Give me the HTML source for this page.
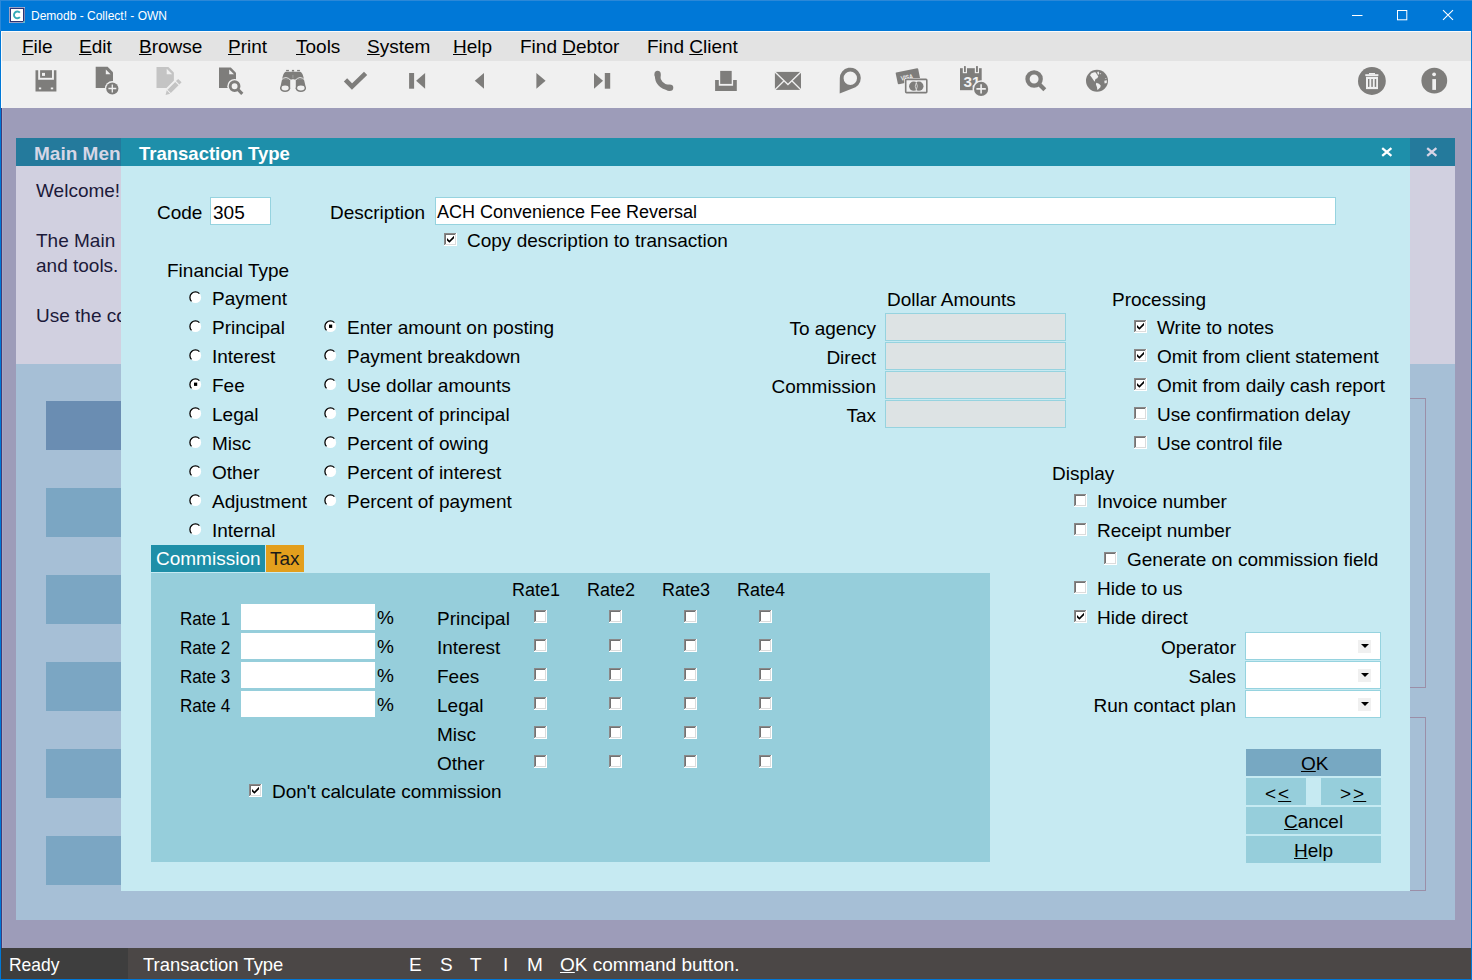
<!DOCTYPE html>
<html><head><meta charset="utf-8"><style>
html,body{margin:0;padding:0;width:1472px;height:980px;overflow:hidden}
body{position:relative;font-family:"Liberation Sans",sans-serif}
body>div,body>svg{position:absolute}
.t{white-space:nowrap}
u{text-decoration:underline;text-decoration-thickness:1px;text-underline-offset:1px}
</style></head><body>
<div style="left:0px;top:0px;width:1472px;height:980px;background:#0078d7;"></div>
<svg style="left:9px;top:7px" width="16" height="16" viewBox="0 0 16 16"><rect x="0" y="0" width="16" height="16" fill="#b8bcd8"/><rect x="0.8" y="0.8" width="14.6" height="14.4" fill="#2b3576"/><rect x="2" y="2" width="12" height="12" fill="#fff"/><path d="M10.9 5.6 A3.4 3.4 0 1 0 10.9 10.2" fill="none" stroke="#35abb8" stroke-width="1.9"/><rect x="14.2" y="14.2" width="1.8" height="1.8" fill="#5cc0d0"/></svg>
<div class="t" style="left:31px;top:10px;font-size:12px;line-height:12px;color:#fff;">Demodb - Collect! - OWN</div>
<svg style="left:1350px;top:8px" width="110" height="16" viewBox="0 0 110 16"><path d="M2 7.5 H12.5" stroke="#fff" stroke-width="1"/><rect x="47.5" y="2.5" width="9.3" height="9.3" fill="none" stroke="#fff"/><path d="M93 2.2 L103 11.8 M103 2.2 L93 11.8" stroke="#fff" stroke-width="1.1"/></svg>
<div style="left:1px;top:31px;width:1470px;height:30px;background:#e3e3e3;"></div>
<div style="left:1px;top:31px;width:1470px;height:1px;background:#fbfbfb;"></div>
<div style="left:1px;top:31px;width:1px;height:77px;background:#fbfbfb;"></div>
<div style="left:0px;top:0px;width:1472px;height:1px;background:#2b88d8;"></div>
<div style="left:0px;top:0px;width:1px;height:31px;background:#2b88d8;"></div>
<div style="left:2px;top:61px;width:1469px;height:47px;background:#f0f0f0;"></div>
<div class="t" style="left:22px;top:37px;font-size:19px;line-height:19px;color:#000;"><u>F</u>ile</div>
<div class="t" style="left:79px;top:37px;font-size:19px;line-height:19px;color:#000;"><u>E</u>dit</div>
<div class="t" style="left:139px;top:37px;font-size:19px;line-height:19px;color:#000;"><u>B</u>rowse</div>
<div class="t" style="left:228px;top:37px;font-size:19px;line-height:19px;color:#000;"><u>P</u>rint</div>
<div class="t" style="left:296px;top:37px;font-size:19px;line-height:19px;color:#000;"><u>T</u>ools</div>
<div class="t" style="left:367px;top:37px;font-size:19px;line-height:19px;color:#000;"><u>S</u>ystem</div>
<div class="t" style="left:453px;top:37px;font-size:19px;line-height:19px;color:#000;"><u>H</u>elp</div>
<div class="t" style="left:520px;top:37px;font-size:19px;line-height:19px;color:#000;">Find <u>D</u>ebtor</div>
<div class="t" style="left:647px;top:37px;font-size:19px;line-height:19px;color:#000;">Find <u>C</u>lient</div>
<div style="left:1px;top:108px;width:1470px;height:840px;background:#9d9cb9;"></div>
<div style="left:1px;top:108px;width:1px;height:840px;background:#403c78;"></div>
<div style="left:2px;top:108px;width:1px;height:840px;background:#a6a6c2;"></div>
<div style="left:1470px;top:108px;width:1px;height:840px;background:#a49fb8;"></div>
<div style="left:16px;top:138px;width:1439px;height:28px;background:#247a9c;"></div>
<div class="t" style="left:34px;top:144px;font-size:19px;line-height:19px;color:#d6d6e6;font-weight:bold">Main Menu</div>
<svg style="left:1426px;top:147px" width="12" height="10" viewBox="0 0 12 10"><path d="M1.2 1.1 L10.4 8.9 M10.4 1.1 L1.2 8.9" stroke="#d8d4e6" stroke-width="2.3"/></svg>
<div style="left:16px;top:166px;width:1439px;height:198px;background:#d1d0e0;"></div>
<div class="t" style="left:36px;top:181px;font-size:19px;line-height:19px;color:#1c1a3a;">Welcome!</div>
<div class="t" style="left:36px;top:231px;font-size:19px;line-height:19px;color:#1c1a3a;">The Main</div>
<div class="t" style="left:36px;top:256px;font-size:19px;line-height:19px;color:#1c1a3a;">and tools.</div>
<div class="t" style="left:36px;top:306px;font-size:19px;line-height:19px;color:#1c1a3a;">Use the co</div>
<div style="left:16px;top:364px;width:1439px;height:556px;background:#a6bfd6;"></div>
<div style="left:46px;top:401px;width:100px;height:49px;background:#6a8db2;"></div>
<div style="left:46px;top:488px;width:100px;height:49px;background:#7ba6c3;"></div>
<div style="left:46px;top:575px;width:100px;height:49px;background:#7ba6c3;"></div>
<div style="left:46px;top:662px;width:100px;height:49px;background:#7ba6c3;"></div>
<div style="left:46px;top:749px;width:100px;height:49px;background:#7ba6c3;"></div>
<div style="left:46px;top:836px;width:100px;height:49px;background:#7ba6c3;"></div>
<div style="left:1380px;top:398px;width:46px;height:290px;border:1px solid #9b8fa8;border-left:none;box-sizing:border-box"></div>
<div style="left:1380px;top:717px;width:46px;height:174px;border:1px solid #9b8fa8;border-left:none;box-sizing:border-box"></div>
<div style="left:121px;top:138px;width:1289px;height:28px;background:#1e8faa;"></div>
<div class="t" style="left:139px;top:145px;font-size:18.5px;line-height:18.5px;color:#fff;font-weight:bold">Transaction Type</div>
<svg style="left:1381px;top:147px" width="12" height="10" viewBox="0 0 12 10"><path d="M1.2 1.1 L10.4 8.9 M10.4 1.1 L1.2 8.9" stroke="#fff" stroke-width="2.3"/></svg>
<div style="left:121px;top:166px;width:1289px;height:725px;background:#c6eaf2;"></div>
<div class="t" style="left:157px;top:203px;font-size:19px;line-height:19px;color:#000;">Code</div>
<div style="left:210px;top:197px;width:61px;height:28px;background:#fff;border:1px solid #96d3df;box-sizing:border-box"></div>
<div class="t" style="left:213px;top:203px;font-size:19px;line-height:19px;color:#000;">305</div>
<div class="t" style="left:330px;top:203px;font-size:19px;line-height:19px;color:#000;">Description</div>
<div style="left:435px;top:197px;width:901px;height:28px;background:#fff;border:1px solid #96d3df;box-sizing:border-box"></div>
<div class="t" style="left:437px;top:203px;font-size:18px;line-height:18px;color:#000;">ACH Convenience Fee Reversal</div>
<svg style="left:444px;top:233px" width="13" height="13" viewBox="0 0 13 13"><rect x="0" y="0" width="13" height="13" fill="#fff"/><rect x="0" y="0" width="12" height="12" fill="#8a8888"/><rect x="1" y="1" width="11" height="11" fill="#dcdcdc"/><rect x="1" y="1" width="10" height="10" fill="#727272"/><rect x="2" y="2" width="9" height="9" fill="#fff"/><path d="M3 5 L5.4 7.4 L10 2.8 L10 5.2 L5.4 9.8 L3 7.4 Z" fill="#000"/></svg>
<div class="t" style="left:467px;top:231px;font-size:19px;line-height:19px;color:#000;">Copy description to transaction</div>
<div class="t" style="left:167px;top:261px;font-size:19px;line-height:19px;color:#000;">Financial Type</div>
<svg style="left:189px;top:291px" width="13" height="13" viewBox="0 0 13 13"><circle cx="6.4" cy="6.4" r="5.7" fill="#fff"/><path d="M2.5 10.4 A5.5 5.5 0 0 1 10.4 2.6" fill="none" stroke="#000" stroke-width="1.3"/></svg>
<div class="t" style="left:212px;top:289px;font-size:19px;line-height:19px;color:#000;">Payment</div>
<svg style="left:189px;top:320px" width="13" height="13" viewBox="0 0 13 13"><circle cx="6.4" cy="6.4" r="5.7" fill="#fff"/><path d="M2.5 10.4 A5.5 5.5 0 0 1 10.4 2.6" fill="none" stroke="#000" stroke-width="1.3"/></svg>
<div class="t" style="left:212px;top:318px;font-size:19px;line-height:19px;color:#000;">Principal</div>
<svg style="left:189px;top:349px" width="13" height="13" viewBox="0 0 13 13"><circle cx="6.4" cy="6.4" r="5.7" fill="#fff"/><path d="M2.5 10.4 A5.5 5.5 0 0 1 10.4 2.6" fill="none" stroke="#000" stroke-width="1.3"/></svg>
<div class="t" style="left:212px;top:347px;font-size:19px;line-height:19px;color:#000;">Interest</div>
<svg style="left:189px;top:378px" width="13" height="13" viewBox="0 0 13 13"><circle cx="6.4" cy="6.4" r="5.7" fill="#fff"/><path d="M2.5 10.4 A5.5 5.5 0 0 1 10.4 2.6" fill="none" stroke="#000" stroke-width="1.3"/><rect x="5" y="4.6" width="3.2" height="3.3" fill="#000"/></svg>
<div class="t" style="left:212px;top:376px;font-size:19px;line-height:19px;color:#000;">Fee</div>
<svg style="left:189px;top:407px" width="13" height="13" viewBox="0 0 13 13"><circle cx="6.4" cy="6.4" r="5.7" fill="#fff"/><path d="M2.5 10.4 A5.5 5.5 0 0 1 10.4 2.6" fill="none" stroke="#000" stroke-width="1.3"/></svg>
<div class="t" style="left:212px;top:405px;font-size:19px;line-height:19px;color:#000;">Legal</div>
<svg style="left:189px;top:436px" width="13" height="13" viewBox="0 0 13 13"><circle cx="6.4" cy="6.4" r="5.7" fill="#fff"/><path d="M2.5 10.4 A5.5 5.5 0 0 1 10.4 2.6" fill="none" stroke="#000" stroke-width="1.3"/></svg>
<div class="t" style="left:212px;top:434px;font-size:19px;line-height:19px;color:#000;">Misc</div>
<svg style="left:189px;top:465px" width="13" height="13" viewBox="0 0 13 13"><circle cx="6.4" cy="6.4" r="5.7" fill="#fff"/><path d="M2.5 10.4 A5.5 5.5 0 0 1 10.4 2.6" fill="none" stroke="#000" stroke-width="1.3"/></svg>
<div class="t" style="left:212px;top:463px;font-size:19px;line-height:19px;color:#000;">Other</div>
<svg style="left:189px;top:494px" width="13" height="13" viewBox="0 0 13 13"><circle cx="6.4" cy="6.4" r="5.7" fill="#fff"/><path d="M2.5 10.4 A5.5 5.5 0 0 1 10.4 2.6" fill="none" stroke="#000" stroke-width="1.3"/></svg>
<div class="t" style="left:212px;top:492px;font-size:19px;line-height:19px;color:#000;">Adjustment</div>
<svg style="left:189px;top:523px" width="13" height="13" viewBox="0 0 13 13"><circle cx="6.4" cy="6.4" r="5.7" fill="#fff"/><path d="M2.5 10.4 A5.5 5.5 0 0 1 10.4 2.6" fill="none" stroke="#000" stroke-width="1.3"/></svg>
<div class="t" style="left:212px;top:521px;font-size:19px;line-height:19px;color:#000;">Internal</div>
<svg style="left:324px;top:320px" width="13" height="13" viewBox="0 0 13 13"><circle cx="6.4" cy="6.4" r="5.7" fill="#fff"/><path d="M2.5 10.4 A5.5 5.5 0 0 1 10.4 2.6" fill="none" stroke="#000" stroke-width="1.3"/><rect x="5" y="4.6" width="3.2" height="3.3" fill="#000"/></svg>
<div class="t" style="left:347px;top:318px;font-size:19px;line-height:19px;color:#000;">Enter amount on posting</div>
<svg style="left:324px;top:349px" width="13" height="13" viewBox="0 0 13 13"><circle cx="6.4" cy="6.4" r="5.7" fill="#fff"/><path d="M2.5 10.4 A5.5 5.5 0 0 1 10.4 2.6" fill="none" stroke="#000" stroke-width="1.3"/></svg>
<div class="t" style="left:347px;top:347px;font-size:19px;line-height:19px;color:#000;">Payment breakdown</div>
<svg style="left:324px;top:378px" width="13" height="13" viewBox="0 0 13 13"><circle cx="6.4" cy="6.4" r="5.7" fill="#fff"/><path d="M2.5 10.4 A5.5 5.5 0 0 1 10.4 2.6" fill="none" stroke="#000" stroke-width="1.3"/></svg>
<div class="t" style="left:347px;top:376px;font-size:19px;line-height:19px;color:#000;">Use dollar amounts</div>
<svg style="left:324px;top:407px" width="13" height="13" viewBox="0 0 13 13"><circle cx="6.4" cy="6.4" r="5.7" fill="#fff"/><path d="M2.5 10.4 A5.5 5.5 0 0 1 10.4 2.6" fill="none" stroke="#000" stroke-width="1.3"/></svg>
<div class="t" style="left:347px;top:405px;font-size:19px;line-height:19px;color:#000;">Percent of principal</div>
<svg style="left:324px;top:436px" width="13" height="13" viewBox="0 0 13 13"><circle cx="6.4" cy="6.4" r="5.7" fill="#fff"/><path d="M2.5 10.4 A5.5 5.5 0 0 1 10.4 2.6" fill="none" stroke="#000" stroke-width="1.3"/></svg>
<div class="t" style="left:347px;top:434px;font-size:19px;line-height:19px;color:#000;">Percent of owing</div>
<svg style="left:324px;top:465px" width="13" height="13" viewBox="0 0 13 13"><circle cx="6.4" cy="6.4" r="5.7" fill="#fff"/><path d="M2.5 10.4 A5.5 5.5 0 0 1 10.4 2.6" fill="none" stroke="#000" stroke-width="1.3"/></svg>
<div class="t" style="left:347px;top:463px;font-size:19px;line-height:19px;color:#000;">Percent of interest</div>
<svg style="left:324px;top:494px" width="13" height="13" viewBox="0 0 13 13"><circle cx="6.4" cy="6.4" r="5.7" fill="#fff"/><path d="M2.5 10.4 A5.5 5.5 0 0 1 10.4 2.6" fill="none" stroke="#000" stroke-width="1.3"/></svg>
<div class="t" style="left:347px;top:492px;font-size:19px;line-height:19px;color:#000;">Percent of payment</div>
<div class="t" style="left:887px;top:290px;font-size:19px;line-height:19px;color:#000;">Dollar Amounts</div>
<div class="t" style="right:596px;top:319px;font-size:19px;line-height:19px">To agency</div>
<div style="left:885px;top:313px;width:181px;height:28px;background:#dde3e4;border:1px solid #96d3df;box-sizing:border-box"></div>
<div class="t" style="right:596px;top:348px;font-size:19px;line-height:19px">Direct</div>
<div style="left:885px;top:342px;width:181px;height:28px;background:#dde3e4;border:1px solid #96d3df;box-sizing:border-box"></div>
<div class="t" style="right:596px;top:377px;font-size:19px;line-height:19px">Commission</div>
<div style="left:885px;top:371px;width:181px;height:28px;background:#dde3e4;border:1px solid #96d3df;box-sizing:border-box"></div>
<div class="t" style="right:596px;top:406px;font-size:19px;line-height:19px">Tax</div>
<div style="left:885px;top:400px;width:181px;height:28px;background:#dde3e4;border:1px solid #96d3df;box-sizing:border-box"></div>
<div class="t" style="left:1112px;top:290px;font-size:19px;line-height:19px;color:#000;">Processing</div>
<svg style="left:1134px;top:320px" width="13" height="13" viewBox="0 0 13 13"><rect x="0" y="0" width="13" height="13" fill="#fff"/><rect x="0" y="0" width="12" height="12" fill="#8a8888"/><rect x="1" y="1" width="11" height="11" fill="#dcdcdc"/><rect x="1" y="1" width="10" height="10" fill="#727272"/><rect x="2" y="2" width="9" height="9" fill="#fff"/><path d="M3 5 L5.4 7.4 L10 2.8 L10 5.2 L5.4 9.8 L3 7.4 Z" fill="#000"/></svg>
<div class="t" style="left:1157px;top:318px;font-size:19px;line-height:19px;color:#000;">Write to notes</div>
<svg style="left:1134px;top:349px" width="13" height="13" viewBox="0 0 13 13"><rect x="0" y="0" width="13" height="13" fill="#fff"/><rect x="0" y="0" width="12" height="12" fill="#8a8888"/><rect x="1" y="1" width="11" height="11" fill="#dcdcdc"/><rect x="1" y="1" width="10" height="10" fill="#727272"/><rect x="2" y="2" width="9" height="9" fill="#fff"/><path d="M3 5 L5.4 7.4 L10 2.8 L10 5.2 L5.4 9.8 L3 7.4 Z" fill="#000"/></svg>
<div class="t" style="left:1157px;top:347px;font-size:19px;line-height:19px;color:#000;">Omit from client statement</div>
<svg style="left:1134px;top:378px" width="13" height="13" viewBox="0 0 13 13"><rect x="0" y="0" width="13" height="13" fill="#fff"/><rect x="0" y="0" width="12" height="12" fill="#8a8888"/><rect x="1" y="1" width="11" height="11" fill="#dcdcdc"/><rect x="1" y="1" width="10" height="10" fill="#727272"/><rect x="2" y="2" width="9" height="9" fill="#fff"/><path d="M3 5 L5.4 7.4 L10 2.8 L10 5.2 L5.4 9.8 L3 7.4 Z" fill="#000"/></svg>
<div class="t" style="left:1157px;top:376px;font-size:19px;line-height:19px;color:#000;">Omit from daily cash report</div>
<svg style="left:1134px;top:407px" width="13" height="13" viewBox="0 0 13 13"><rect x="0" y="0" width="13" height="13" fill="#fff"/><rect x="0" y="0" width="12" height="12" fill="#8a8888"/><rect x="1" y="1" width="11" height="11" fill="#dcdcdc"/><rect x="1" y="1" width="10" height="10" fill="#727272"/><rect x="2" y="2" width="9" height="9" fill="#fff"/></svg>
<div class="t" style="left:1157px;top:405px;font-size:19px;line-height:19px;color:#000;">Use confirmation delay</div>
<svg style="left:1134px;top:436px" width="13" height="13" viewBox="0 0 13 13"><rect x="0" y="0" width="13" height="13" fill="#fff"/><rect x="0" y="0" width="12" height="12" fill="#8a8888"/><rect x="1" y="1" width="11" height="11" fill="#dcdcdc"/><rect x="1" y="1" width="10" height="10" fill="#727272"/><rect x="2" y="2" width="9" height="9" fill="#fff"/></svg>
<div class="t" style="left:1157px;top:434px;font-size:19px;line-height:19px;color:#000;">Use control file</div>
<div class="t" style="left:1052px;top:464px;font-size:19px;line-height:19px;color:#000;">Display</div>
<svg style="left:1074px;top:494px" width="13" height="13" viewBox="0 0 13 13"><rect x="0" y="0" width="13" height="13" fill="#fff"/><rect x="0" y="0" width="12" height="12" fill="#8a8888"/><rect x="1" y="1" width="11" height="11" fill="#dcdcdc"/><rect x="1" y="1" width="10" height="10" fill="#727272"/><rect x="2" y="2" width="9" height="9" fill="#fff"/></svg>
<div class="t" style="left:1097px;top:492px;font-size:19px;line-height:19px;color:#000;">Invoice number</div>
<svg style="left:1074px;top:523px" width="13" height="13" viewBox="0 0 13 13"><rect x="0" y="0" width="13" height="13" fill="#fff"/><rect x="0" y="0" width="12" height="12" fill="#8a8888"/><rect x="1" y="1" width="11" height="11" fill="#dcdcdc"/><rect x="1" y="1" width="10" height="10" fill="#727272"/><rect x="2" y="2" width="9" height="9" fill="#fff"/></svg>
<div class="t" style="left:1097px;top:521px;font-size:19px;line-height:19px;color:#000;">Receipt number</div>
<svg style="left:1104px;top:552px" width="13" height="13" viewBox="0 0 13 13"><rect x="0" y="0" width="13" height="13" fill="#fff"/><rect x="0" y="0" width="12" height="12" fill="#8a8888"/><rect x="1" y="1" width="11" height="11" fill="#dcdcdc"/><rect x="1" y="1" width="10" height="10" fill="#727272"/><rect x="2" y="2" width="9" height="9" fill="#fff"/></svg>
<div class="t" style="left:1127px;top:550px;font-size:19px;line-height:19px;color:#000;">Generate on commission field</div>
<svg style="left:1074px;top:581px" width="13" height="13" viewBox="0 0 13 13"><rect x="0" y="0" width="13" height="13" fill="#fff"/><rect x="0" y="0" width="12" height="12" fill="#8a8888"/><rect x="1" y="1" width="11" height="11" fill="#dcdcdc"/><rect x="1" y="1" width="10" height="10" fill="#727272"/><rect x="2" y="2" width="9" height="9" fill="#fff"/></svg>
<div class="t" style="left:1097px;top:579px;font-size:19px;line-height:19px;color:#000;">Hide to us</div>
<svg style="left:1074px;top:610px" width="13" height="13" viewBox="0 0 13 13"><rect x="0" y="0" width="13" height="13" fill="#fff"/><rect x="0" y="0" width="12" height="12" fill="#8a8888"/><rect x="1" y="1" width="11" height="11" fill="#dcdcdc"/><rect x="1" y="1" width="10" height="10" fill="#727272"/><rect x="2" y="2" width="9" height="9" fill="#fff"/><path d="M3 5 L5.4 7.4 L10 2.8 L10 5.2 L5.4 9.8 L3 7.4 Z" fill="#000"/></svg>
<div class="t" style="left:1097px;top:608px;font-size:19px;line-height:19px;color:#000;">Hide direct</div>
<div class="t" style="right:236px;top:638px;font-size:19px;line-height:19px">Operator</div>
<div style="left:1245px;top:632px;width:136px;height:28px;background:#fff;border:1px solid #96d3df;box-sizing:border-box"></div>
<div style="left:1358px;top:640px;width:13px;height:13px;background:#f0f0f0"></div>
<svg style="left:1361px;top:644px" width="9" height="6" viewBox="0 0 9 6"><path d="M0 0 H8 L4 4 Z" fill="#000"/></svg>
<div class="t" style="right:236px;top:667px;font-size:19px;line-height:19px">Sales</div>
<div style="left:1245px;top:661px;width:136px;height:28px;background:#fff;border:1px solid #96d3df;box-sizing:border-box"></div>
<div style="left:1358px;top:669px;width:13px;height:13px;background:#f0f0f0"></div>
<svg style="left:1361px;top:673px" width="9" height="6" viewBox="0 0 9 6"><path d="M0 0 H8 L4 4 Z" fill="#000"/></svg>
<div class="t" style="right:236px;top:696px;font-size:19px;line-height:19px">Run contact plan</div>
<div style="left:1245px;top:690px;width:136px;height:28px;background:#fff;border:1px solid #96d3df;box-sizing:border-box"></div>
<div style="left:1358px;top:698px;width:13px;height:13px;background:#f0f0f0"></div>
<svg style="left:1361px;top:702px" width="9" height="6" viewBox="0 0 9 6"><path d="M0 0 H8 L4 4 Z" fill="#000"/></svg>
<div style="left:151px;top:545px;width:114px;height:27px;background:#1e8fa8;"></div>
<div class="t" style="left:156px;top:549px;font-size:19px;line-height:19px;color:#fff;">Commission</div>
<div style="left:266px;top:545px;width:38px;height:27px;background:#e39f1d;"></div>
<div class="t" style="left:270px;top:549px;font-size:19px;line-height:19px;color:#1a1a1a;">Tax</div>
<div style="left:151px;top:573px;width:839px;height:289px;background:#96cedb;"></div>
<div class="t" style="left:180px;top:609px;font-size:19px;line-height:19px;color:#000;transform:scaleX(0.9);transform-origin:0 0;">Rate 1</div>
<div style="left:241px;top:604px;width:134px;height:26px;background:#fff;"></div>
<div class="t" style="left:377px;top:608px;font-size:19px;line-height:19px;color:#000;">%</div>
<div class="t" style="left:180px;top:638px;font-size:19px;line-height:19px;color:#000;transform:scaleX(0.9);transform-origin:0 0;">Rate 2</div>
<div style="left:241px;top:633px;width:134px;height:26px;background:#fff;"></div>
<div class="t" style="left:377px;top:637px;font-size:19px;line-height:19px;color:#000;">%</div>
<div class="t" style="left:180px;top:667px;font-size:19px;line-height:19px;color:#000;transform:scaleX(0.9);transform-origin:0 0;">Rate 3</div>
<div style="left:241px;top:662px;width:134px;height:26px;background:#fff;"></div>
<div class="t" style="left:377px;top:666px;font-size:19px;line-height:19px;color:#000;">%</div>
<div class="t" style="left:180px;top:696px;font-size:19px;line-height:19px;color:#000;transform:scaleX(0.9);transform-origin:0 0;">Rate 4</div>
<div style="left:241px;top:691px;width:134px;height:26px;background:#fff;"></div>
<div class="t" style="left:377px;top:695px;font-size:19px;line-height:19px;color:#000;">%</div>
<div class="t" style="left:512px;top:581px;font-size:18px;line-height:18px;color:#000;">Rate1</div>
<div class="t" style="left:587px;top:581px;font-size:18px;line-height:18px;color:#000;">Rate2</div>
<div class="t" style="left:662px;top:581px;font-size:18px;line-height:18px;color:#000;">Rate3</div>
<div class="t" style="left:737px;top:581px;font-size:18px;line-height:18px;color:#000;">Rate4</div>
<div class="t" style="left:437px;top:609px;font-size:19px;line-height:19px;color:#000;">Principal</div>
<svg style="left:534px;top:610px" width="13" height="13" viewBox="0 0 13 13"><rect x="0" y="0" width="13" height="13" fill="#fff"/><rect x="0" y="0" width="12" height="12" fill="#8a8888"/><rect x="1" y="1" width="11" height="11" fill="#dcdcdc"/><rect x="1" y="1" width="10" height="10" fill="#727272"/><rect x="2" y="2" width="9" height="9" fill="#fff"/></svg>
<svg style="left:609px;top:610px" width="13" height="13" viewBox="0 0 13 13"><rect x="0" y="0" width="13" height="13" fill="#fff"/><rect x="0" y="0" width="12" height="12" fill="#8a8888"/><rect x="1" y="1" width="11" height="11" fill="#dcdcdc"/><rect x="1" y="1" width="10" height="10" fill="#727272"/><rect x="2" y="2" width="9" height="9" fill="#fff"/></svg>
<svg style="left:684px;top:610px" width="13" height="13" viewBox="0 0 13 13"><rect x="0" y="0" width="13" height="13" fill="#fff"/><rect x="0" y="0" width="12" height="12" fill="#8a8888"/><rect x="1" y="1" width="11" height="11" fill="#dcdcdc"/><rect x="1" y="1" width="10" height="10" fill="#727272"/><rect x="2" y="2" width="9" height="9" fill="#fff"/></svg>
<svg style="left:759px;top:610px" width="13" height="13" viewBox="0 0 13 13"><rect x="0" y="0" width="13" height="13" fill="#fff"/><rect x="0" y="0" width="12" height="12" fill="#8a8888"/><rect x="1" y="1" width="11" height="11" fill="#dcdcdc"/><rect x="1" y="1" width="10" height="10" fill="#727272"/><rect x="2" y="2" width="9" height="9" fill="#fff"/></svg>
<div class="t" style="left:437px;top:638px;font-size:19px;line-height:19px;color:#000;">Interest</div>
<svg style="left:534px;top:639px" width="13" height="13" viewBox="0 0 13 13"><rect x="0" y="0" width="13" height="13" fill="#fff"/><rect x="0" y="0" width="12" height="12" fill="#8a8888"/><rect x="1" y="1" width="11" height="11" fill="#dcdcdc"/><rect x="1" y="1" width="10" height="10" fill="#727272"/><rect x="2" y="2" width="9" height="9" fill="#fff"/></svg>
<svg style="left:609px;top:639px" width="13" height="13" viewBox="0 0 13 13"><rect x="0" y="0" width="13" height="13" fill="#fff"/><rect x="0" y="0" width="12" height="12" fill="#8a8888"/><rect x="1" y="1" width="11" height="11" fill="#dcdcdc"/><rect x="1" y="1" width="10" height="10" fill="#727272"/><rect x="2" y="2" width="9" height="9" fill="#fff"/></svg>
<svg style="left:684px;top:639px" width="13" height="13" viewBox="0 0 13 13"><rect x="0" y="0" width="13" height="13" fill="#fff"/><rect x="0" y="0" width="12" height="12" fill="#8a8888"/><rect x="1" y="1" width="11" height="11" fill="#dcdcdc"/><rect x="1" y="1" width="10" height="10" fill="#727272"/><rect x="2" y="2" width="9" height="9" fill="#fff"/></svg>
<svg style="left:759px;top:639px" width="13" height="13" viewBox="0 0 13 13"><rect x="0" y="0" width="13" height="13" fill="#fff"/><rect x="0" y="0" width="12" height="12" fill="#8a8888"/><rect x="1" y="1" width="11" height="11" fill="#dcdcdc"/><rect x="1" y="1" width="10" height="10" fill="#727272"/><rect x="2" y="2" width="9" height="9" fill="#fff"/></svg>
<div class="t" style="left:437px;top:667px;font-size:19px;line-height:19px;color:#000;">Fees</div>
<svg style="left:534px;top:668px" width="13" height="13" viewBox="0 0 13 13"><rect x="0" y="0" width="13" height="13" fill="#fff"/><rect x="0" y="0" width="12" height="12" fill="#8a8888"/><rect x="1" y="1" width="11" height="11" fill="#dcdcdc"/><rect x="1" y="1" width="10" height="10" fill="#727272"/><rect x="2" y="2" width="9" height="9" fill="#fff"/></svg>
<svg style="left:609px;top:668px" width="13" height="13" viewBox="0 0 13 13"><rect x="0" y="0" width="13" height="13" fill="#fff"/><rect x="0" y="0" width="12" height="12" fill="#8a8888"/><rect x="1" y="1" width="11" height="11" fill="#dcdcdc"/><rect x="1" y="1" width="10" height="10" fill="#727272"/><rect x="2" y="2" width="9" height="9" fill="#fff"/></svg>
<svg style="left:684px;top:668px" width="13" height="13" viewBox="0 0 13 13"><rect x="0" y="0" width="13" height="13" fill="#fff"/><rect x="0" y="0" width="12" height="12" fill="#8a8888"/><rect x="1" y="1" width="11" height="11" fill="#dcdcdc"/><rect x="1" y="1" width="10" height="10" fill="#727272"/><rect x="2" y="2" width="9" height="9" fill="#fff"/></svg>
<svg style="left:759px;top:668px" width="13" height="13" viewBox="0 0 13 13"><rect x="0" y="0" width="13" height="13" fill="#fff"/><rect x="0" y="0" width="12" height="12" fill="#8a8888"/><rect x="1" y="1" width="11" height="11" fill="#dcdcdc"/><rect x="1" y="1" width="10" height="10" fill="#727272"/><rect x="2" y="2" width="9" height="9" fill="#fff"/></svg>
<div class="t" style="left:437px;top:696px;font-size:19px;line-height:19px;color:#000;">Legal</div>
<svg style="left:534px;top:697px" width="13" height="13" viewBox="0 0 13 13"><rect x="0" y="0" width="13" height="13" fill="#fff"/><rect x="0" y="0" width="12" height="12" fill="#8a8888"/><rect x="1" y="1" width="11" height="11" fill="#dcdcdc"/><rect x="1" y="1" width="10" height="10" fill="#727272"/><rect x="2" y="2" width="9" height="9" fill="#fff"/></svg>
<svg style="left:609px;top:697px" width="13" height="13" viewBox="0 0 13 13"><rect x="0" y="0" width="13" height="13" fill="#fff"/><rect x="0" y="0" width="12" height="12" fill="#8a8888"/><rect x="1" y="1" width="11" height="11" fill="#dcdcdc"/><rect x="1" y="1" width="10" height="10" fill="#727272"/><rect x="2" y="2" width="9" height="9" fill="#fff"/></svg>
<svg style="left:684px;top:697px" width="13" height="13" viewBox="0 0 13 13"><rect x="0" y="0" width="13" height="13" fill="#fff"/><rect x="0" y="0" width="12" height="12" fill="#8a8888"/><rect x="1" y="1" width="11" height="11" fill="#dcdcdc"/><rect x="1" y="1" width="10" height="10" fill="#727272"/><rect x="2" y="2" width="9" height="9" fill="#fff"/></svg>
<svg style="left:759px;top:697px" width="13" height="13" viewBox="0 0 13 13"><rect x="0" y="0" width="13" height="13" fill="#fff"/><rect x="0" y="0" width="12" height="12" fill="#8a8888"/><rect x="1" y="1" width="11" height="11" fill="#dcdcdc"/><rect x="1" y="1" width="10" height="10" fill="#727272"/><rect x="2" y="2" width="9" height="9" fill="#fff"/></svg>
<div class="t" style="left:437px;top:725px;font-size:19px;line-height:19px;color:#000;">Misc</div>
<svg style="left:534px;top:726px" width="13" height="13" viewBox="0 0 13 13"><rect x="0" y="0" width="13" height="13" fill="#fff"/><rect x="0" y="0" width="12" height="12" fill="#8a8888"/><rect x="1" y="1" width="11" height="11" fill="#dcdcdc"/><rect x="1" y="1" width="10" height="10" fill="#727272"/><rect x="2" y="2" width="9" height="9" fill="#fff"/></svg>
<svg style="left:609px;top:726px" width="13" height="13" viewBox="0 0 13 13"><rect x="0" y="0" width="13" height="13" fill="#fff"/><rect x="0" y="0" width="12" height="12" fill="#8a8888"/><rect x="1" y="1" width="11" height="11" fill="#dcdcdc"/><rect x="1" y="1" width="10" height="10" fill="#727272"/><rect x="2" y="2" width="9" height="9" fill="#fff"/></svg>
<svg style="left:684px;top:726px" width="13" height="13" viewBox="0 0 13 13"><rect x="0" y="0" width="13" height="13" fill="#fff"/><rect x="0" y="0" width="12" height="12" fill="#8a8888"/><rect x="1" y="1" width="11" height="11" fill="#dcdcdc"/><rect x="1" y="1" width="10" height="10" fill="#727272"/><rect x="2" y="2" width="9" height="9" fill="#fff"/></svg>
<svg style="left:759px;top:726px" width="13" height="13" viewBox="0 0 13 13"><rect x="0" y="0" width="13" height="13" fill="#fff"/><rect x="0" y="0" width="12" height="12" fill="#8a8888"/><rect x="1" y="1" width="11" height="11" fill="#dcdcdc"/><rect x="1" y="1" width="10" height="10" fill="#727272"/><rect x="2" y="2" width="9" height="9" fill="#fff"/></svg>
<div class="t" style="left:437px;top:754px;font-size:19px;line-height:19px;color:#000;">Other</div>
<svg style="left:534px;top:755px" width="13" height="13" viewBox="0 0 13 13"><rect x="0" y="0" width="13" height="13" fill="#fff"/><rect x="0" y="0" width="12" height="12" fill="#8a8888"/><rect x="1" y="1" width="11" height="11" fill="#dcdcdc"/><rect x="1" y="1" width="10" height="10" fill="#727272"/><rect x="2" y="2" width="9" height="9" fill="#fff"/></svg>
<svg style="left:609px;top:755px" width="13" height="13" viewBox="0 0 13 13"><rect x="0" y="0" width="13" height="13" fill="#fff"/><rect x="0" y="0" width="12" height="12" fill="#8a8888"/><rect x="1" y="1" width="11" height="11" fill="#dcdcdc"/><rect x="1" y="1" width="10" height="10" fill="#727272"/><rect x="2" y="2" width="9" height="9" fill="#fff"/></svg>
<svg style="left:684px;top:755px" width="13" height="13" viewBox="0 0 13 13"><rect x="0" y="0" width="13" height="13" fill="#fff"/><rect x="0" y="0" width="12" height="12" fill="#8a8888"/><rect x="1" y="1" width="11" height="11" fill="#dcdcdc"/><rect x="1" y="1" width="10" height="10" fill="#727272"/><rect x="2" y="2" width="9" height="9" fill="#fff"/></svg>
<svg style="left:759px;top:755px" width="13" height="13" viewBox="0 0 13 13"><rect x="0" y="0" width="13" height="13" fill="#fff"/><rect x="0" y="0" width="12" height="12" fill="#8a8888"/><rect x="1" y="1" width="11" height="11" fill="#dcdcdc"/><rect x="1" y="1" width="10" height="10" fill="#727272"/><rect x="2" y="2" width="9" height="9" fill="#fff"/></svg>
<svg style="left:249px;top:784px" width="13" height="13" viewBox="0 0 13 13"><rect x="0" y="0" width="13" height="13" fill="#fff"/><rect x="0" y="0" width="12" height="12" fill="#8a8888"/><rect x="1" y="1" width="11" height="11" fill="#dcdcdc"/><rect x="1" y="1" width="10" height="10" fill="#727272"/><rect x="2" y="2" width="9" height="9" fill="#fff"/><path d="M3 5 L5.4 7.4 L10 2.8 L10 5.2 L5.4 9.8 L3 7.4 Z" fill="#000"/></svg>
<div class="t" style="left:272px;top:782px;font-size:19px;line-height:19px;color:#000;">Don't calculate commission</div>
<div style="left:1246px;top:749px;width:135px;height:27px;background:#77a8c2;"></div>
<div class="t" style="left:1301px;top:754px;font-size:19px;line-height:19px;color:#000;"><u>O</u>K</div>
<div style="left:1246px;top:778px;width:60px;height:27px;background:#96cedb;"></div>
<div class="t" style="left:1265px;top:784px;font-size:19px;line-height:19px;color:#000;letter-spacing:2px">&lt;<u>&lt;</u></div>
<div style="left:1321px;top:778px;width:60px;height:27px;background:#96cedb;"></div>
<div class="t" style="left:1340px;top:784px;font-size:19px;line-height:19px;color:#000;letter-spacing:2px">&gt;<u>&gt;</u></div>
<div style="left:1246px;top:807px;width:135px;height:27px;background:#96cedb;"></div>
<div class="t" style="left:1284px;top:812px;font-size:19px;line-height:19px;color:#000;"><u>C</u>ancel</div>
<div style="left:1246px;top:836px;width:135px;height:27px;background:#96cedb;"></div>
<div class="t" style="left:1294px;top:841px;font-size:19px;line-height:19px;color:#000;"><u>H</u>elp</div>
<div style="left:1px;top:948px;width:1470px;height:31px;background:#4b4746;"></div>
<div style="left:1px;top:948px;width:127px;height:31px;background:#3e3e3e;"></div>
<div class="t" style="left:9px;top:955px;font-size:19px;line-height:19px;color:#fff;transform:scaleX(0.92);transform-origin:0 0;">Ready</div>
<div class="t" style="left:143px;top:955px;font-size:19px;line-height:19px;color:#fff;transform:scaleX(0.97);transform-origin:0 0;">Transaction Type</div>
<div class="t" style="left:409px;top:955px;font-size:19px;line-height:19px;color:#fff;">E</div>
<div class="t" style="left:440px;top:955px;font-size:19px;line-height:19px;color:#fff;">S</div>
<div class="t" style="left:470px;top:955px;font-size:19px;line-height:19px;color:#fff;">T</div>
<div class="t" style="left:503px;top:955px;font-size:19px;line-height:19px;color:#fff;">I</div>
<div class="t" style="left:527px;top:955px;font-size:19px;line-height:19px;color:#fff;">M</div>
<div class="t" style="left:560px;top:955px;font-size:19px;line-height:19px;color:#fff;"><u>O</u>K command button.</div>
<svg style="left:0;top:0" width="1472" height="108" viewBox="0 0 1472 108"><path d="M35.5 70.2 H38.2 V79.7 H53.9 V70.2 H56.4 V91.4 H35.5 Z" fill="#7e7d7b"/><rect x="40.1" y="70.2" width="11.9" height="7.6" fill="#7e7d7b"/><rect x="42" y="72.9" width="3" height="3" fill="#f0f0f0"/><rect x="38.9" y="87.5" width="2.3" height="1.8" fill="#f0f0f0"/><rect x="50.8" y="87.5" width="2.4" height="1.8" fill="#f0f0f0"/><path d="M95.7 66.8 H107.6 L113 72.2 V87.9 H95.7 Z" fill="#7e7d7b"/><path d="M105.8 69.5 V74.3 H110.6 Z" fill="#f0f0f0"/><circle cx="112.3" cy="88.5" r="7.4" fill="#f0f0f0"/><circle cx="112.3" cy="88.5" r="6.1" fill="#7e7d7b"/><path d="M108.4 88.5 H116.3 M112.3 84.6 V92.4" stroke="#f0f0f0" stroke-width="1.3"/><path d="M156.5 67 H168.4 L173.9 72.5 V88 H156.5 Z" fill="#c4c4c4"/><path d="M166.7 68.8 V74.3 H172.2 Z" fill="#f0f0f0"/><path d="M164 96.5 L183 77.5" stroke="#f0f0f0" stroke-width="8.4"/><path d="M165.60 94.90 L170.13 93.77 L166.73 90.37 Z M170.83 93.06 L178.61 85.28 L175.22 81.89 L167.44 89.67 Z M179.39 84.51 L181.60 82.30 L178.20 78.90 L175.99 81.11 Z" fill="#c4c4c4"/><path d="M219 67.5 H230.8 L236 72.7 V88 H219 Z" fill="#7e7d7b"/><path d="M229.2 69.5 V74.3 H234 Z" fill="#f0f0f0"/><circle cx="234.6" cy="86.2" r="7.3" fill="#f0f0f0"/><circle cx="234.6" cy="86.2" r="4.4" fill="none" stroke="#7e7d7b" stroke-width="2.9"/><path d="M237.6 89.2 L242.3 93.9" stroke="#7e7d7b" stroke-width="3.1"/><rect x="286.1" y="69.9" width="2.8" height="1.3" fill="#7e7d7b"/><rect x="297.1" y="69.9" width="2.8" height="1.3" fill="#7e7d7b"/><rect x="291.9" y="69.9" width="2.2" height="1.6" fill="#7e7d7b"/><path d="M282.1 79.4 C282.6 75.5 283.8 72.6 285.6 71.7 H300.4 C302.2 72.6 303.4 75.5 303.9 79.4 Z" fill="#7e7d7b"/><path d="M282.1 79.2 H290.4 V88.2 H280.1 Z M295.6 79.2 H303.9 L306 88.2 H295.6 Z" fill="#7e7d7b"/><path d="M281.3 79.9 Q286 75.0 290.9 80.4 M295.1 80.4 Q300 75.0 304.7 79.9" stroke="#f0f0f0" stroke-width="0.9" fill="none"/><path d="M290.5 81.6 L293 79.1 L295.5 81.6 V93 H290.5 Z" fill="#f0f0f0"/><rect x="292.5" y="74.9" width="0.9" height="3.3" fill="#a4a4a4"/><ellipse cx="285.1" cy="88.35" rx="5.1" ry="3.65" fill="#7e7d7b"/><ellipse cx="285.1" cy="88.05" rx="3.6" ry="2.45" fill="#f0f0f0"/><ellipse cx="300.8" cy="88.35" rx="5.2" ry="3.65" fill="#7e7d7b"/><ellipse cx="300.85" cy="88.05" rx="3.75" ry="2.45" fill="#f0f0f0"/><path d="M345.5 79.8 L352 86.6 L365.6 73.3" stroke="#7e7d7b" stroke-width="4.6" fill="none"/><rect x="409.1" y="73" width="5" height="15.7" fill="#7e7d7b"/><path d="M416.1 80.85 L425.1 73 V88.7 Z" fill="#7e7d7b"/><path d="M474.8 80.85 L484 73 V88.7 Z" fill="#7e7d7b"/><path d="M545.6 80.85 L536.4 73 V88.7 Z" fill="#7e7d7b"/><path d="M603 80.85 L594 73 V88.7 Z" fill="#7e7d7b"/><rect x="604.8" y="73" width="5.4" height="15.7" fill="#7e7d7b"/><path d="M657.6 75 C657.3 81.5 661.5 87.2 669 87.6" stroke="#7e7d7b" stroke-width="5.4" fill="none"/><ellipse cx="657.6" cy="74.4" rx="3.2" ry="3.6" fill="#7e7d7b"/><ellipse cx="669.5" cy="87.7" rx="3.8" ry="3.2" fill="#7e7d7b"/><path d="M715.1 80 H718.8 V85.8 H733.1 V80 H736.8 V90.9 H715.1 Z" fill="#7e7d7b"/><rect x="720.2" y="70.9" width="11.5" height="13" fill="#7e7d7b"/><rect x="774.9" y="71.9" width="26.1" height="18" fill="#7e7d7b"/><path d="M774.5 71.5 L787.95 84.5 L801.4 71.5 M774.5 90.3 L783.6 81.3 M801.4 90.3 L792.3 81.3" stroke="#f0f0f0" stroke-width="1.3" fill="none"/><path d="M839.7 93.6 L839.8 78.3 A10.5 10.5 0 1 1 855.5 87.3 Z M857 78.3 A6.7 6.7 0 1 0 843.6 78.3 A6.7 6.7 0 1 0 857 78.3 Z" fill="#7e7d7b" fill-rule="evenodd"/><path d="M896.2 72.6 L917.1 68.3 Q918 68.2 918.2 69 L920.2 78.9 Q920.3 79.8 919.5 80 L898.8 84.2 Q898 84.3 897.8 83.5 L895.7 73.6 Q895.5 72.8 896.2 72.6 Z" fill="#7e7d7b"/><text x="900.5" y="79.8" transform="rotate(-11 906 77)" font-family="Liberation Sans" font-weight="bold" font-size="6.6" fill="#f0f0f0" textLength="12.5" lengthAdjust="spacingAndGlyphs">VISA</text><rect x="904.2" y="77.9" width="24.1" height="16.2" rx="1.5" fill="#f0f0f0"/><rect x="905.7" y="79.4" width="21.1" height="13.2" rx="0.8" fill="none" stroke="#7e7d7b" stroke-width="1.6"/><circle cx="913.7" cy="86.2" r="4.6" fill="#7e7d7b"/><circle cx="918.9" cy="86.2" r="4.6" fill="#7e7d7b"/><path d="M916.3 82.6 Q914.2 86.2 916.3 89.8 M916.3 82.6 Q918.4 86.2 916.3 89.8" stroke="#f0f0f0" stroke-width="0.7" fill="none"/><path d="M960 68.2 H981.7 V90.2 H960 Z" fill="#7e7d7b"/><rect x="962.8" y="65" width="4.2" height="8.2" fill="#f0f0f0"/><rect x="974.8" y="65" width="4.2" height="8.2" fill="#f0f0f0"/><rect x="964" y="66.1" width="1.8" height="6" fill="#7e7d7b"/><rect x="976" y="66.1" width="1.9" height="6" fill="#7e7d7b"/><text x="963.5" y="87.2" font-family="Liberation Sans" font-weight="bold" font-size="15" fill="#f0f0f0" textLength="17" lengthAdjust="spacingAndGlyphs">31</text><circle cx="981.1" cy="88.9" r="8.6" fill="#f0f0f0"/><circle cx="981.1" cy="88.9" r="7.1" fill="#7e7d7b"/><path d="M976.4 88.9 H985.8 M981.1 84.2 V93.6" stroke="#f0f0f0" stroke-width="1.6"/><circle cx="1034.1" cy="79" r="6.6" fill="none" stroke="#7e7d7b" stroke-width="4.3"/><path d="M1039 84 L1044.8 89.8" stroke="#7e7d7b" stroke-width="4.2"/><circle cx="1097" cy="80.7" r="11" fill="#7e7d7b"/><path d="M1090 75.3 L1091.5 73.2 L1094.2 72.2 L1095.9 72.6 L1096.6 73.9 L1097.6 75.6 L1098.3 76.6 L1097.3 78.3 L1095.6 79 L1094.9 80.4 L1095.2 81.6 L1094.3 81.3 L1093.2 79.7 L1091.9 77.7 Z" fill="#f0f0f0"/><path d="M1096.3 82.8 L1099 83.8 L1100.7 85.5 L1100.4 87.2 L1098.4 89.2 L1097.3 90 L1097 87.2 L1095.9 84.5 Z" fill="#f0f0f0"/><path d="M1097.2 72 L1098.6 71.6 L1099.2 73.6 L1098 75.2 Z M1099.6 73 L1101.2 73.4 L1100.8 74.6 Z" fill="#f0f0f0"/><path d="M1104.3 80.8 L1106.9 80.3 L1106.7 82.9 L1104.6 83.5 Z M1104.8 78.2 L1106.3 78 L1106.2 78.9 Z" fill="#f0f0f0"/><circle cx="1371.9" cy="81" r="13.9" fill="#7e7d7b"/><rect x="1365.3" y="74.2" width="13.1" height="1.9" fill="#f0f0f0"/><rect x="1369" y="73" width="6" height="1.5" fill="#f0f0f0"/><rect x="1366" y="76.8" width="12" height="12.3" fill="#f0f0f0"/><rect x="1368" y="79" width="1.4" height="7.9" fill="#7e7d7b"/><rect x="1371.3" y="79" width="1.5" height="7.9" fill="#7e7d7b"/><rect x="1374.7" y="79" width="1.5" height="7.9" fill="#7e7d7b"/><circle cx="1434.3" cy="80.7" r="12.9" fill="#7e7d7b"/><circle cx="1434.1" cy="74.3" r="1.9" fill="#f0f0f0"/><rect x="1432.3" y="79.1" width="3.7" height="10.8" fill="#f0f0f0"/></svg>
</body></html>
